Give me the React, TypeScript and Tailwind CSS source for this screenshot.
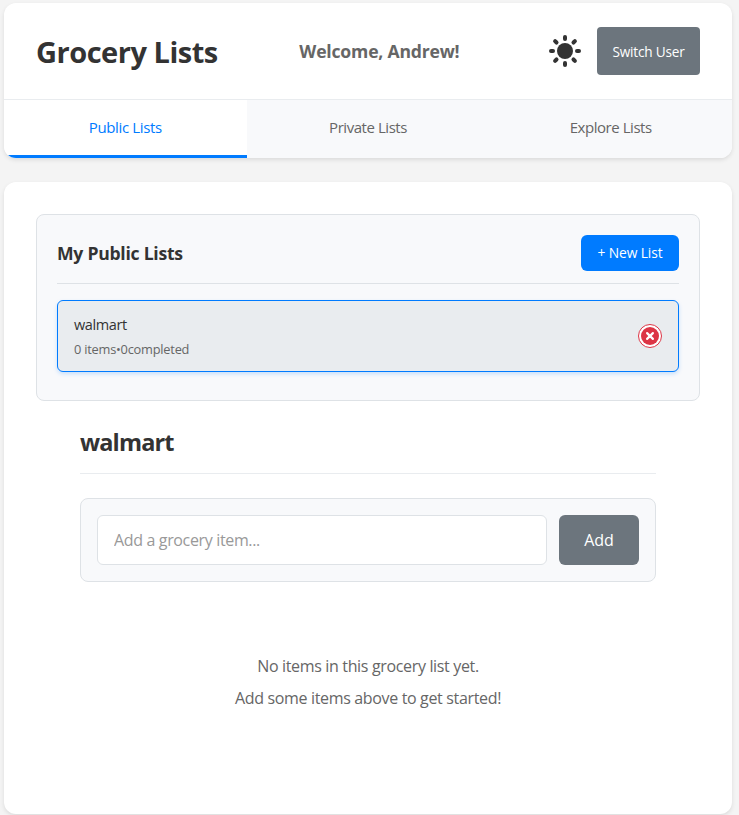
const RAYS = [0, 45, 90, 135, 180, 225, 270, 315];

function SunIcon() {
  return (
    <svg className="size-8 shrink-0" viewBox="0 0 32 32" fill="none" stroke="#333333" strokeWidth="4" strokeLinecap="round">
      <circle cx="16" cy="16" r="8" fill="#333333" stroke="none" />
      {RAYS.map((a) => (
        <path key={a} d="M16 2v2" transform={`rotate(${a} 16 16)`} />
      ))}
    </svg>
  );
}

function DeleteIcon() {
  return (
    <svg className="size-6 shrink-0" viewBox="0 0 24 24">
      <circle cx="12" cy="12" r="11.5" fill="#ffffff" stroke="#dc3545" />
      <circle cx="12" cy="12" r="9" fill="#dc3545" />
      <path d="M9.1 9.1l5.8 5.8M14.9 9.1l-5.8 5.8" stroke="#ffffff" strokeWidth="2.2" strokeLinecap="round" />
    </svg>
  );
}

const tab = "flex flex-1 items-center justify-center border-b-[3px] text-[15px]";

export default function App() {
  return (
    <div className="h-[815px] overflow-hidden bg-[#f4f4f4] pt-[3px] pr-[7px] pl-1 font-['Open_Sans','Noto_Sans',sans-serif] text-[#333333]">
      <header className="flex h-[155px] flex-col overflow-hidden rounded-xl bg-white shadow-[0_2px_4px_rgba(0,0,0,0.1)]">
        <div className="flex h-[97px] shrink-0 items-center justify-between border-b border-[#e9ecef] px-8">
          <h1 className="pt-0.5 text-[29px] leading-10 font-bold tracking-[-0.48px] whitespace-nowrap">Grocery Lists</h1>
          <span className="mr-2 text-[17.6px] leading-6 font-bold tracking-[-0.2px] whitespace-nowrap text-[#666666]">Welcome, Andrew!</span>
          <div className="flex items-center gap-4">
            <SunIcon />
            <button className="h-12 w-[103px] rounded bg-[#6c757d] pt-0.5 text-[13.6px] tracking-[-0.2px] whitespace-nowrap text-white">Switch User</button>
          </div>
        </div>
        <nav className="flex flex-1 bg-[#f8f9fb]">
          <button className={`${tab} border-[#007bff] bg-white tracking-[-0.35px] text-[#007bff]`}>Public Lists</button>
          <button className={`${tab} border-transparent tracking-[-0.45px] text-[#666666]`}>Private Lists</button>
          <button className={`${tab} border-transparent tracking-[-0.45px] text-[#666666]`}>Explore Lists</button>
        </nav>
      </header>

      <main className="mt-6 h-[632px] rounded-xl bg-white px-8 pt-8 shadow-[0_2px_4px_rgba(0,0,0,0.1)]">
        <section className="h-[187px] rounded-lg border border-[#dee2e6] bg-[#f8f9fb] p-5">
          <div className="flex h-[49px] items-start justify-between border-b border-[#dee2e6]">
            <h2 className="text-[17.6px] leading-9 font-bold tracking-[-0.26px]">My Public Lists</h2>
            <button className="h-9 w-[98px] rounded-md bg-[#007bff] text-[13.8px] tracking-[-0.1px] whitespace-nowrap text-white">+ New List</button>
          </div>
          <div className="mt-4 flex h-[72px] items-center justify-between rounded-md border border-[#007bff] bg-[#e9ecef] px-4 shadow-[0_2px_4px_rgba(0,123,255,0.2)]">
            <div className="flex flex-col">
              <span className="pt-0.5 text-[14.5px] leading-6 tracking-[-0.4px]">walmart</span>
              <span className="pb-px text-[12.8px] leading-6 tracking-[-0.22px] text-[#666666]">0 items•0completed</span>
            </div>
            <button aria-label="Delete list">
              <DeleteIcon />
            </button>
          </div>
        </section>

        <section className="px-11">
          <h2 className="h-[73px] border-b border-[#e9ecef] pt-[25px] text-[23.5px] leading-8 font-bold tracking-[-0.85px]">walmart</h2>
          <div className="mt-6 flex h-[84px] gap-3 rounded-lg border border-[#dee2e6] bg-[#f8f9fb] p-4">
            <input
              className="min-w-0 flex-1 rounded-md border border-[#dee2e6] bg-white px-4 text-[16px] tracking-[-0.35px] placeholder:text-[#999999]"
              placeholder="Add a grocery item..."
            />
            <button className="w-20 rounded-md bg-[#6c757d] text-[16px] text-white">Add</button>
          </div>
          <div className="mt-[68px] text-center text-[16px] leading-8 tracking-[-0.34px] text-[#666666]">
            <p>No items in this grocery list yet.</p>
            <p>Add some items above to get started!</p>
          </div>
        </section>
      </main>
    </div>
  );
}
